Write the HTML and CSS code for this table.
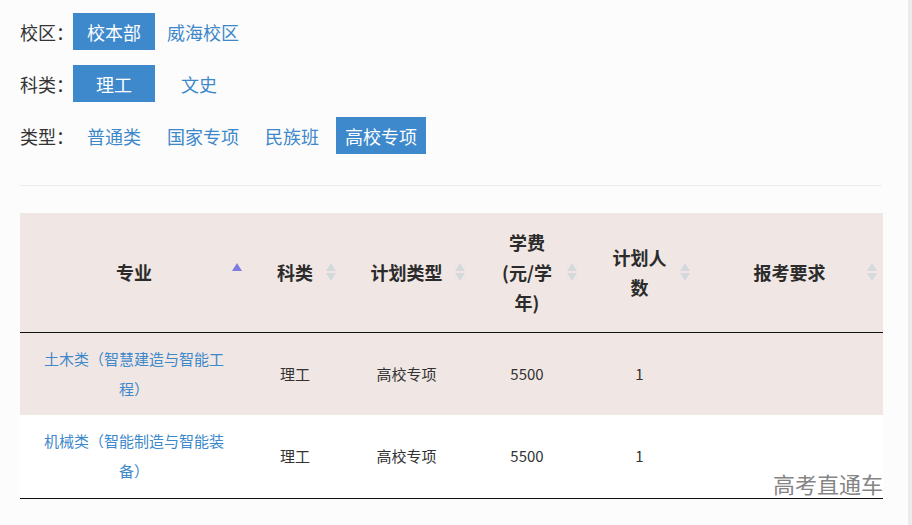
FILE: index.html
```html
<!DOCTYPE html>
<html lang="zh-CN">
<head>
<meta charset="utf-8">
<title>招生计划</title>
<link rel="stylesheet" href="styles.css">
</head>
<body>
<div class="page">
  <div class="filters">
    <div class="filter-row">
      <span class="label">校区：</span>
      <a class="opt active">校本部</a>
      <a class="opt">威海校区</a>
    </div>
    <div class="filter-row">
      <span class="label">科类：</span>
      <a class="opt active">理工</a>
      <a class="opt">文史</a>
    </div>
    <div class="filter-row">
      <span class="label">类型：</span>
      <a class="opt">普通类</a>
      <a class="opt">国家专项</a>
      <a class="opt">民族班</a>
      <a class="opt active">高校专项</a>
    </div>
  </div>
  <div class="divider"></div>
  <div class="table-wrap">
    <table class="plan">
      <colgroup>
        <col class="c1"><col class="c2"><col class="c3"><col class="c4"><col class="c5"><col class="c6">
      </colgroup>
      <thead>
        <tr>
          <th>专业<svg class="sort" viewBox="0 0 10 20"><polygon class="up on" points="5,1 10,9 0,9"/></svg></th>
          <th>科类<svg class="sort" viewBox="0 0 10 20"><polygon class="up" points="5,1 10,9 0,9"/><polygon class="down" points="0,11 10,11 5,19"/></svg></th>
          <th>计划类型<svg class="sort" viewBox="0 0 10 20"><polygon class="up" points="5,1 10,9 0,9"/><polygon class="down" points="0,11 10,11 5,19"/></svg></th>
          <th><span class="wrap">学费(元/学年)</span><svg class="sort" viewBox="0 0 10 20"><polygon class="up" points="5,1 10,9 0,9"/><polygon class="down" points="0,11 10,11 5,19"/></svg></th>
          <th><span class="wrap">计划人数</span><svg class="sort" viewBox="0 0 10 20"><polygon class="up" points="5,1 10,9 0,9"/><polygon class="down" points="0,11 10,11 5,19"/></svg></th>
          <th>报考要求<svg class="sort" viewBox="0 0 10 20"><polygon class="up" points="5,1 10,9 0,9"/><polygon class="down" points="0,11 10,11 5,19"/></svg></th>
        </tr>
      </thead>
      <tbody>
        <tr class="odd">
          <td class="major"><a>土木类（智慧建造与智能工程）</a></td>
          <td>理工</td>
          <td>高校专项</td>
          <td>5500</td>
          <td>1</td>
          <td></td>
        </tr>
        <tr class="even">
          <td class="major"><a>机械类（智能制造与智能装备）</a></td>
          <td>理工</td>
          <td>高校专项</td>
          <td>5500</td>
          <td>1</td>
          <td></td>
        </tr>
      </tbody>
    </table>
    <span class="watermark">高考直通车</span>
  </div>
</div>
</body>
</html>
```

FILE: styles.css
```css
html {
  background: #ebebeb;
}
body {
  margin: 0;
  font-family: "Noto Sans CJK SC", "Noto Sans", sans-serif;
  color: #333;
}
.page {
  width: 908px;
  min-height: 525px;
  background: #fcfcfc;
  box-sizing: border-box;
  padding: 13px 25px 0 20px;
}
.filters {
  display: flex;
  flex-direction: column;
  gap: 15px;
}
.filter-row {
  display: flex;
  align-items: center;
  height: 37px;
  font-size: 18px;
}
.label {
  width: 53px;
  color: #333;
  white-space: nowrap;
}
.opt {
  display: inline-flex;
  align-items: center;
  justify-content: center;
  box-sizing: border-box;
  height: 37px;
  min-width: 82px;
  padding: 0 9px;
  margin-right: 3px;
  color: #3d88ca;
  white-space: nowrap;
}
.opt.active {
  background: #3e89cb;
  color: #fff;
}
.divider {
  height: 1px;
  background: #ececec;
  margin-top: 31px;
  width: 862px;
}
.table-wrap {
  position: relative;
  margin-top: 27px;
  width: 863px;
}
.plan {
  width: 863px;
  table-layout: fixed;
  border-collapse: collapse;
}
.c1 { width: 228px; }
.c2 { width: 94px; }
.c3 { width: 129px; }
.c4 { width: 112px; }
.c5 { width: 113px; }
.c6 { width: 187px; }
.plan thead tr {
  background: #f0e6e4;
}
.plan th {
  position: relative;
  height: 119px;
  box-sizing: border-box;
  padding: 0 16px;
  font-size: 18px;
  font-weight: bold;
  line-height: 30px;
  color: #2b2b2b;
  text-align: center;
  border-bottom: 1px solid #111;
}
.wrap {
  display: inline-block;
  max-width: 58px;
}
.sort {
  position: absolute;
  right: 6px;
  top: 50%;
  margin-top: -10px;
  width: 10px;
  height: 20px;
}
.sort polygon {
  fill: #d3d9dc;
}
.sort polygon.on {
  fill: #7d7de0;
}
.plan td {
  height: 83px;
  box-sizing: border-box;
  padding: 0 10px;
  font-size: 15px;
  line-height: 30px;
  text-align: center;
  color: #333;
}
.plan td.major {
  padding: 0 20px;
}
.plan td.major a {
  color: #3d88ca;
}
.plan tr.odd {
  background: #f0e6e4;
}
.plan tr.even {
  background: #fff;
}
.plan tbody tr:last-child td {
  border-bottom: 1px solid #111;
}
.watermark {
  position: absolute;
  right: 0;
  bottom: 3px;
  font-size: 22px;
  line-height: 26px;
  color: #858585;
  white-space: nowrap;
}
```
